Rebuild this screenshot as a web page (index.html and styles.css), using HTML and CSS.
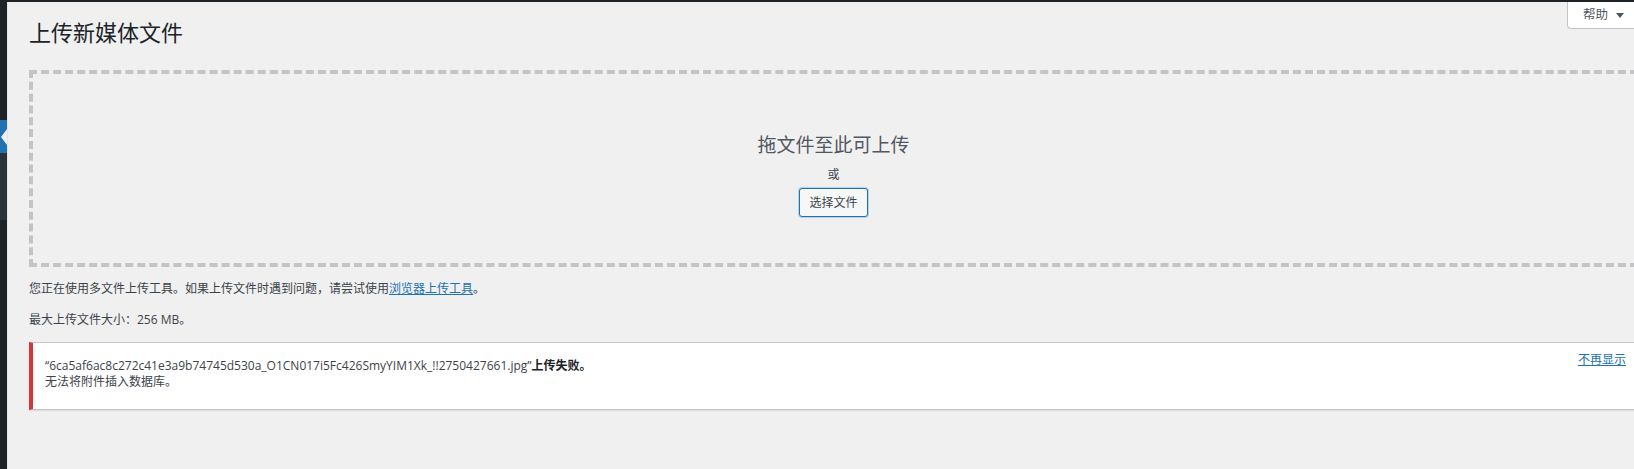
FILE: index.html
```html
<!DOCTYPE html>
<html lang="zh-CN">
<head>
<meta charset="utf-8">
<title>上传新媒体文件</title>
<link rel="stylesheet" href="styles.css">
</head>
<body>
<div class="adminbar"></div>
<div class="layout">
  <aside class="sidebar">
    <div class="menu-top"></div>
    <div class="menu-current"><span class="menu-arrow"></span></div>
    <div class="submenu"></div>
    <div class="menu-rest"></div>
  </aside>
  <main class="content">
    <div class="help-tab">帮助<span class="help-caret"></span></div>
    <h1 class="page-title">上传新媒体文件</h1>
    <div class="drop-area">
      <p class="drop-info">拖文件至此可上传</p>
      <p class="drop-or">或</p>
      <button class="select-button" type="button">选择文件</button>
    </div>
    <p class="hint">您正在使用多文件上传工具。如果上传文件时遇到问题，请尝试使用<a href="#" class="link">浏览器上传工具</a>。</p>
    <p class="hint max-size">最大上传文件大小：256 MB。</p>
    <div class="notice">
      <div class="notice-message">
        <div class="notice-line">“6ca5af6ac8c272c41e3a9b74745d530a_O1CN017i5Fc426SmyYIM1Xk_!!2750427661.jpg”<strong>上传失败。</strong></div>
        <div class="notice-line">无法将附件插入数据库。</div>
      </div>
      <a href="#" class="link dismiss">不再显示</a>
    </div>
  </main>
</div>
</body>
</html>
```
FILE: styles.css
```css
html, body {
  margin: 0;
  padding: 0;
  height: 100%;
  overflow: hidden;
}
body {
  background: #f0f0f1;
  font-family: "Open Sans", "Noto Sans CJK SC", sans-serif;
  font-size: 12px;
  color: #3c434a;
  text-spacing-trim: space-all;
}
.adminbar {
  height: 2px;
  background: #1d2327;
}
.layout {
  display: flex;
  height: calc(100% - 2px);
}
.sidebar {
  width: 7px;
  flex: none;
  display: flex;
  flex-direction: column;
  background: #1d2327;
}
.menu-top {
  height: 118px;
  background: #1d2327;
}
.menu-current {
  position: relative;
  height: 33px;
  background: #2271b1;
}
.menu-arrow {
  position: absolute;
  right: 0;
  top: 9px;
  width: 0;
  height: 0;
  border-top: 8px solid transparent;
  border-bottom: 8px solid transparent;
  border-right: 6px solid #f0f0f1;
}
.submenu {
  height: 67px;
  background: #2c3338;
}
.menu-rest {
  flex: 1;
  background: #1d2327;
}
.content {
  position: relative;
  flex: 1;
  margin-right: -4px;
  padding-left: 21px;
  border-left: 1px solid #e4e4e6;
}
.help-tab {
  position: absolute;
  top: 0;
  left: 1559px;
  right: -20px;
  height: 27px;
  box-sizing: border-box;
  padding-left: 15px;
  display: flex;
  align-items: center;
  background: #fff;
  border-left: 1px solid #c3c4c7;
  border-bottom: 1px solid #c3c4c7;
  border-bottom-left-radius: 4px;
  color: #50575e;
  font-size: 12.5px;
  line-height: 16px;
}
.help-caret {
  margin-left: 8px;
  width: 0;
  height: 0;
  border-left: 4px solid transparent;
  border-right: 4px solid transparent;
  border-top: 5px solid #50575e;
}
.page-title {
  margin: 16px 0 0;
  font-size: 22px;
  line-height: 29px;
  font-weight: 400;
  color: #1d2327;
}
.drop-area {
  margin-top: 23px;
  height: 189px;
  border: 4px dashed #c3c4c7;
  display: flex;
  flex-direction: column;
  align-items: center;
}
.drop-info {
  margin: 59px 0 0;
  font-size: 19px;
  line-height: 24px;
  color: #50575e;
}
.drop-or {
  margin: 9px 0 0;
  line-height: 18px;
  color: #3c434a;
}
.select-button {
  margin-top: 4px;
  height: 29px;
  padding: 0 9px;
  font-family: inherit;
  font-size: 12px;
  line-height: 27px;
  color: #3c434a;
  background: #f6f7f7;
  border: 1px solid #2271b1;
  border-radius: 3px;
  box-shadow: 0 0 0 1px rgba(34, 113, 177, 0.25);
}
.hint {
  margin: 13px 0 0;
  line-height: 18px;
}
.link {
  color: #2271b1;
  text-decoration: underline;
}
.notice {
  margin-top: 13px;
  display: flex;
  justify-content: space-between;
  align-items: flex-start;
  height: 68px;
  box-sizing: border-box;
  padding: 9px 11px 0 12px;
  background: #fff;
  border: 1px solid #c3c4c7;
  border-left: 4px solid #d63638;
  box-shadow: 0 1px 1px rgba(0, 0, 0, 0.08);
}
.notice-message {
  padding-top: 6px;
  color: #3c434a;
}
.notice-line {
  line-height: 16px;
}
.notice-line strong {
  font-weight: 700;
  color: #1d2327;
}
.dismiss {
  line-height: 16px;
}
```
